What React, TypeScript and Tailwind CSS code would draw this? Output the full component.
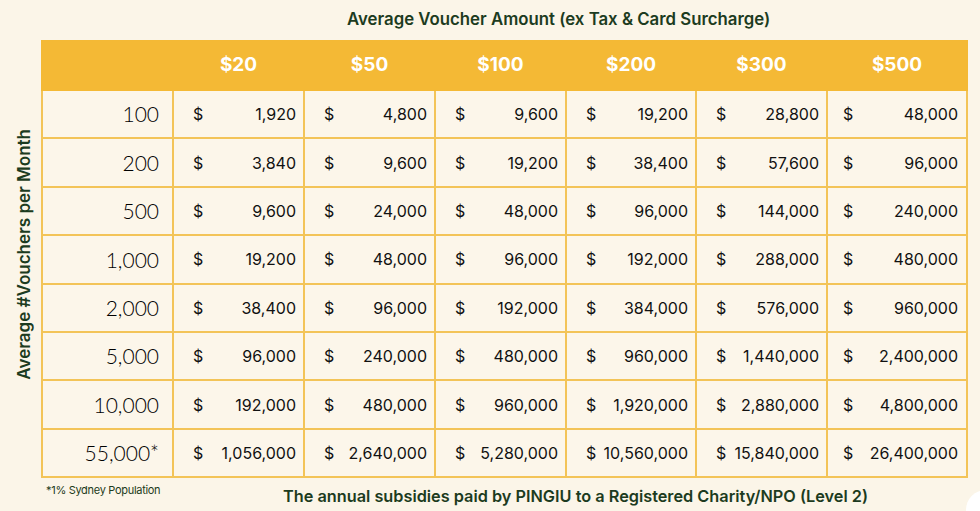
import * as React from 'react';

const amounts = ['$20', '$50', '$100', '$200', '$300', '$500'];
// annual subsidy per voucher/month, in tenths of a dollar
const rates = [192, 480, 960, 1920, 2880, 4800];
const volumes = [
  { label: '100', n: 100 },
  { label: '200', n: 200 },
  { label: '500', n: 500 },
  { label: '1,000', n: 1000 },
  { label: '2,000', n: 2000 },
  { label: '5,000', n: 5000 },
  { label: '10,000', n: 10000 },
  { label: '55,000*', n: 55000 },
];

const fmt = (v: number) => Math.round(v).toLocaleString('en-US');

export default function App() {
  return (
    <div className="relative w-[980px] h-[511px] overflow-hidden bg-[#FBF5E8] text-[#1C3B20]" style={{ fontFamily: 'Inter, "Open Sans", sans-serif' }}>
      {/* Title */}
      <div className="h-[40px] flex items-center pl-[347px] pb-[1px] text-[16.8px] font-semibold">
        Average Voucher Amount (ex Tax &amp; Card Surcharge)
      </div>

      <div className="flex">
        {/* Vertical axis label */}
        <div className="w-[41px] h-[436px] flex items-center justify-center pl-[8px]">
          <span className="[writing-mode:vertical-rl] rotate-180 whitespace-nowrap text-[17px] font-semibold mb-[8px]">
            Average #Vouchers per Month
          </span>
        </div>

        <table className="border-collapse table-fixed w-[925px] bg-[#FCF6EA]">
          <colgroup>
            <col className="w-[131px]" />
            <col className="w-[131px]" />
            <col className="w-[131px]" />
            <col className="w-[131px]" />
            <col className="w-[130px]" />
            <col className="w-[131px]" />
            <col className="w-[140px]" />
          </colgroup>
          <thead>
            <tr className="h-[49px] bg-[#F4B935]">
              <th className="border-2 border-[#F4B935]"></th>
              {amounts.map((a) => (
                <th key={a} className="border-2 border-[#F4B935] text-white text-[19px] font-bold">
                  {a}
                </th>
              ))}
            </tr>
          </thead>
          <tbody>
            {volumes.map((row) => (
              <tr key={row.label} className="h-[48.4px]">
                <td
                  className="border-2 border-[#F3C458] text-right pr-[13px] text-[21px] font-light text-black"
                  style={{ fontFamily: 'Lato, sans-serif' }}
                >
                  {row.label}
                </td>
                {rates.map((r, i) => (
                  <td key={i} className="border-2 border-[#F3C458] text-[16px] text-[#111]">
                    <div className={`flex justify-between ${i === 5 ? 'pl-[15px] pr-[8px]' : 'pl-[19px] pr-[7px]'}`}>
                      <span>$</span>
                      <span>{fmt((row.n * r) / 10)}</span>
                    </div>
                  </td>
                ))}
              </tr>
            ))}
          </tbody>
        </table>
      </div>

      {/* Footer */}
      <div className="flex items-start">
        <div className="pl-[46px] pt-[4px] w-[283px] text-[11px] tracking-[-0.3px]">*1% Sydney Population</div>
        <div className="pt-[6px] text-[16.3px] font-semibold">
          The annual subsidies paid by PINGIU to a Registered Charity/NPO (Level 2)
        </div>
      </div>

      <div className="absolute left-[966px] top-[490px] w-[40px] h-[40px] rounded-full bg-white"></div>
    </div>
  );
}
